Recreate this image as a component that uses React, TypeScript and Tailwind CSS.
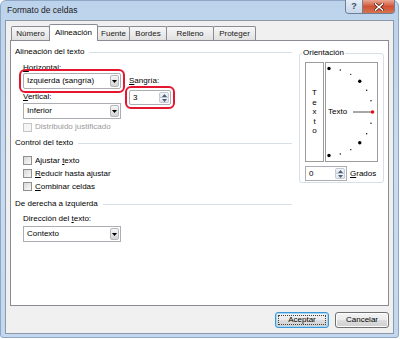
import type { ReactNode } from 'react'

// ── Small controls ────────────────────────────────────────────────────────────

function U({ children }: { children: ReactNode }) {
  return <span className="underline underline-offset-[1px] decoration-[0.5px]">{children}</span>
}

function DropArrow() {
  return (
    <div className="w-[9px] my-[1px] mr-[1px] border border-[#b5b8bd] rounded-[2px] bg-gradient-to-b from-[#f6f6f6] to-[#d4d4d4] flex items-center justify-center">
      <svg width="5" height="3" viewBox="0 0 5 3">
        <path d="M0 0h5L2.5 3z" fill="#000" />
      </svg>
    </div>
  )
}

function Combo({ value, ring }: { value: string; ring?: boolean }) {
  return (
    <div
      className={
        ring
          ? 'h-[16px] w-[98px] flex items-stretch bg-white border border-[#abadb3] rounded-[2px] outline-2 outline-[#e5172f] outline-offset-[2px]'
          : 'h-[16px] w-[98px] flex items-stretch bg-white border border-[#abadb3]'
      }
    >
      <span className="flex-1 pl-[3px] flex items-center leading-none">{value}</span>
      <DropArrow />
    </div>
  )
}

function SpinArrow({ up }: { up?: boolean }) {
  return (
    <svg width="5" height="3" viewBox="0 0 5 3">
      <path d={up ? 'M0 3h5L2.5 0z' : 'M0 0h5L2.5 3z'} fill="#4a5f7e" />
    </svg>
  )
}

function Spin({ value, ring }: { value: string; ring?: boolean }) {
  return (
    <div
      className={
        ring
          ? 'h-[15px] w-[42px] flex items-stretch bg-white border border-[#abadb3] rounded-[2px] outline-2 outline-[#e5172f] outline-offset-[2px]'
          : 'h-[15px] w-[42px] flex items-stretch bg-white border border-[#abadb3]'
      }
    >
      <span className="flex-1 pl-[3px] flex items-center leading-none">{value}</span>
      <div className="w-[10px] my-px mr-px flex flex-col">
        <div className="flex-1 flex items-center justify-center bg-gradient-to-b from-[#f4f6f9] to-[#dfe4ea] border border-[#c3cad4] rounded-t-[2px]">
          <SpinArrow up />
        </div>
        <div className="flex-1 flex items-center justify-center bg-gradient-to-b from-[#f4f6f9] to-[#dfe4ea] border border-t-0 border-[#c3cad4] rounded-b-[2px]">
          <SpinArrow />
        </div>
      </div>
    </div>
  )
}

function Check({ children, disabled }: { children: ReactNode; disabled?: boolean }) {
  return (
    <div className={disabled ? 'h-[12px] flex items-center gap-[3px] text-[#9a9a9a]' : 'h-[13px] flex items-center gap-[3px]'}>
      <div
        className={
          disabled
            ? 'w-[9px] h-[9px] border border-[#c6c6c6] bg-[#f4f4f4]'
            : 'w-[9px] h-[9px] border border-[#8e8f8f] bg-gradient-to-br from-[#d8d8d8] to-[#fafafa]'
        }
      />
      <span className="leading-none">{children}</span>
    </div>
  )
}

function Section({ title }: { title: string }) {
  return (
    <div className="h-[12px] flex items-center gap-[5px]">
      <span className="leading-none">{title}</span>
      <div className="flex-1 h-px bg-[#d5dfe5]" />
    </div>
  )
}

// ── Orientation widget ────────────────────────────────────────────────────────

function Dial() {
  const cx = 3
  const cy = 49
  const r = 43.5
  const angles = [90, 75, 60, 45, 30, 15, 0, -15, -30, -45, -60, -75, -90]
  return (
    <div className="relative w-[53px] h-[100px] border border-[#9c9c9c] bg-white">
      <svg className="absolute inset-0" width="51" height="98" viewBox="0 0 51 98">
        <line x1="27" y1={cy} x2="45" y2={cy} stroke="#505050" strokeWidth="1" />
        {angles.map((a) => {
          const x = cx + r * Math.cos((a * Math.PI) / 180)
          const y = cy - r * Math.sin((a * Math.PI) / 180)
          if (a === 0) return <circle key={a} cx={x} cy={y} r="1.8" fill="#e01010" />
          const big = Math.abs(a) === 90 || Math.abs(a) === 45
          return <circle key={a} cx={x} cy={y} r={big ? 1.7 : 0.7} fill="#000" />
        })}
      </svg>
      <span className="absolute left-[2px] top-[44px] leading-[10px]">Texto</span>
    </div>
  )
}

// ── Main ──────────────────────────────────────────────────────────────────────

const tabs = [
  { label: 'Número', w: 'w-[39px]' },
  { label: 'Alineación', w: 'w-[49px]', active: true },
  { label: 'Fuente', w: 'w-[33px]' },
  { label: 'Bordes', w: 'w-[38px]' },
  { label: 'Relleno', w: 'w-[48px]' },
  { label: 'Proteger', w: 'w-[43px]' },
]

export default function App() {
  return (
    <div className="w-[400px] h-[339px] bg-white text-[8px] text-black font-['Liberation_Sans',Arial,sans-serif] select-none">
      {/* ── Window frame ── */}
      <div className="w-[399px] h-[338px] flex flex-col border border-[#8fa7c4] rounded-t-[6px] rounded-b-[3px] bg-gradient-to-b from-[#bcd3ec] via-[#c9dcf1] to-[#c3d8ee] px-[4px] pb-[3px]">
        {/* Title bar */}
        <div className="h-[19px] flex items-start justify-between -mx-[4px]">
          <span className="self-center pl-[6px] text-[8.5px] leading-none text-[#1a1a1a]">Formato de celdas</span>
          <div className="-mt-px mr-[3px] flex h-[14px] border border-t-0 border-[#6e7f96] rounded-b-[4px] overflow-hidden">
            <div className="w-[17px] flex items-center justify-center bg-gradient-to-b from-[#e6eef8] to-[#c6d6e9] border-r border-[#6e7f96] text-[9px] font-bold text-[#3b4a5e]">
              ?
            </div>
            <div className="w-[31px] flex items-center justify-center bg-gradient-to-b from-[#e9a793] via-[#cf5235] to-[#d8734f]">
              <svg width="10" height="8" viewBox="0 0 10 8">
                <path d="M1.5 1l7 6M8.5 1l-7 6" stroke="#5a1a10" strokeWidth="3" strokeLinecap="square" />
                <path d="M1.5 1l7 6M8.5 1l-7 6" stroke="#fff" strokeWidth="1.6" strokeLinecap="square" />
              </svg>
            </div>
          </div>
        </div>

        {/* Client area */}
        <div className="flex-1 flex flex-col bg-[#f0f0f0] border border-[#8d99a8] pl-[4px] pr-[4px]">
          {/* Tabs */}
          <div className="h-[16px] mt-[3px] flex items-end pl-[2px]">
            {tabs.map((t) => (
              <div
                key={t.label}
                className={
                  t.active
                    ? `${t.w} h-[17px] -mb-px -ml-px relative z-10 bg-white border border-b-0 border-[#898c95] rounded-t-[2px] flex items-center justify-center leading-none`
                    : `${t.w} h-[14px] -ml-px bg-gradient-to-b from-[#f7f7f7] to-[#e1e1e1] border border-b-0 border-[#898c95] rounded-t-[2px] flex items-center justify-center pt-px leading-none text-[#202020]`
                }
              >
                {t.label}
              </div>
            ))}
          </div>

          {/* Tab panel */}
          <div className="h-[266px] bg-white border border-[#898c95] flex pl-[4px] pr-[4px]">
            {/* Left column */}
            <div className="w-[277px] flex flex-col pt-[5px]">
              <Section title="Alineación del texto" />

              <div className="mt-[4px] pl-[8px] flex gap-[8px]">
                <div className="w-[98px] flex flex-col">
                  <div className="h-[11px] flex items-center leading-none">
                    <span><U>H</U>orizontal:</span>
                  </div>
                  <Combo value="Izquierda (sangría)" ring />
                  <div className="h-[11px] mt-[2px] flex items-center leading-none">
                    <span><U>V</U>ertical:</span>
                  </div>
                  <div className="mt-px">
                    <Combo value="Inferior" />
                  </div>
                  <div className="mt-[2px] w-[140px]">
                    <Check disabled>
                      Distribuido <U>j</U>ustificado
                    </Check>
                  </div>
                </div>
                <div className="flex flex-col">
                  <div className="h-[11px] mt-[13px] flex items-center leading-none">
                    <span><U>S</U>angría:</span>
                  </div>
                  <div className="mt-[4px]">
                    <Spin value="3" ring />
                  </div>
                </div>
              </div>

              <div className="mt-[4px]">
                <Section title="Control del texto" />
              </div>
              <div className="mt-[5px] pl-[8px] flex flex-col">
                <Check>
                  Ajustar <U>t</U>exto
                </Check>
                <Check>
                  <U>R</U>educir hasta ajustar
                </Check>
                <Check>
                  <U>C</U>ombinar celdas
                </Check>
              </div>

              <div className="mt-[5px]">
                <Section title="De derecha a izquierda" />
              </div>
              <div className="mt-[3px] pl-[8px] flex flex-col">
                <div className="h-[11px] flex items-center leading-none">
                  <span>Dirección del <U>t</U>exto:</span>
                </div>
                <div className="mt-[2px]">
                  <Combo value="Contexto" />
                </div>
              </div>
            </div>

            {/* Orientation group */}
            <div className="ml-[7px] mt-[12px] relative w-[85px] h-[130px] border border-[#d5dfe5] rounded-[3px] pt-[8px] pl-[5px] pb-px flex flex-col">
              <span className="absolute -top-[7px] left-[2px] px-px bg-white leading-[11px]">Orientación</span>
              <div className="flex gap-px">
                <div className="w-[19px] h-[100px] border border-[#9c9c9c] flex flex-col items-center justify-center leading-[9.6px]">
                  <span>T</span>
                  <span>e</span>
                  <span>x</span>
                  <span>t</span>
                  <span>o</span>
                </div>
                <Dial />
              </div>
              <div className="mt-[4px] flex items-center gap-[3px]">
                <Spin value="0" />
                <span className="leading-none">
                  <U>G</U>rados
                </span>
              </div>
            </div>
          </div>

          {/* Buttons */}
          <div className="mt-[6px] flex justify-end gap-[6px]">
            <button className="w-[54px] h-[16px] p-[2px] rounded-[3px] border border-[#3c95d4] bg-[linear-gradient(#f3f3f3_0%,#ebebeb_48%,#dddddd_52%,#cfcfcf_100%)] shadow-[inset_0_0_0_1px_#a6d7f4]">
              <span className="w-full h-full flex items-center justify-center border border-dotted border-[#404040] leading-none">
                Aceptar
              </span>
            </button>
            <button className="w-[54px] h-[16px] rounded-[3px] border border-[#707070] bg-[linear-gradient(#f3f3f3_0%,#ebebeb_48%,#dddddd_52%,#cfcfcf_100%)] shadow-[inset_0_0_0_1px_#fcfcfc] flex items-center justify-center leading-none">
              Cancelar
            </button>
          </div>
        </div>
      </div>
    </div>
  )
}
